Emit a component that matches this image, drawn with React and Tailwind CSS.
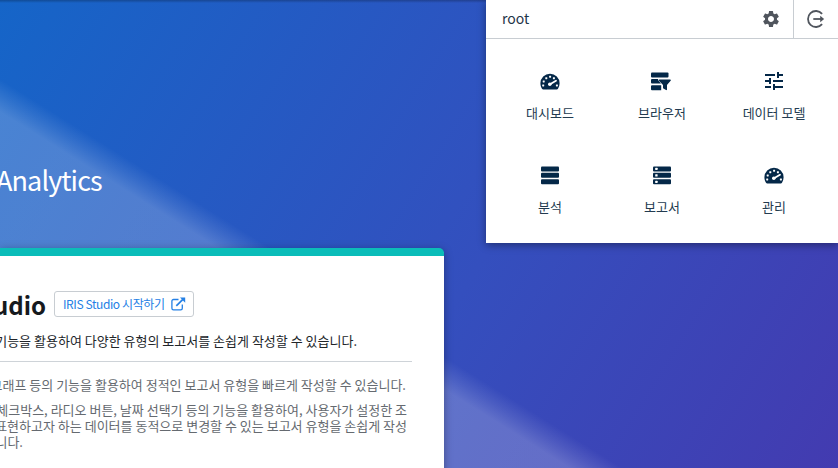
import React from "react";
import { MdSettings, MdTune } from "react-icons/md";

function GaugeIcon() {
  const ticks = [[2.9, 12.4], [3.4, 8.4], [6, 5.2], [9.8, 3.7], [13.6, 5.2], [16.6, 12.4]];
  return (
    <svg width="20" height="17" viewBox="0 0 20 17">
      <path d="M10 .7A9.6 9.6 0 0 0 .4 10.3c0 2 .6 3.9 1.6 5.4.3.5.7.7 1.2.7h13.6c.5 0 .9-.2 1.2-.7a10 10 0 0 0 1.6-5.4A9.6 9.6 0 0 0 10 .7Z" fill="#042848" />
      {ticks.map(([x, y]) => (
        <rect key={x} x={x - 0.7} y={y - 1} width="2" height="2" rx=".4" fill="white" />
      ))}
      <path d="m10 11.2 6-3.5" stroke="white" strokeWidth="1.8" strokeLinecap="round" />
      <circle cx="9.8" cy="11.3" r="1.8" fill="white" />
    </svg>
  );
}

function BrowserIcon() {
  return (
    <svg width="21" height="19" viewBox="0 0 21 19" fill="#042848" className="mr-[3px]">
      <rect x="1" y=".5" width="17.5" height="5" rx="1" />
      <path d="M2 7h6l.4 1.5L11 11.5H2a1 1 0 0 1-1-1V8a1 1 0 0 1 1-1ZM2 13.2h9.2v5.1H2a1 1 0 0 1-1-1v-3.1a1 1 0 0 1 1-1Z" />
      <path d="M9.5 7.5h10.6c.8 0 1 .8.5 1.3L17 13v4.6c0 .7-.5.8-1 .5l-2.6-1.5c-.3-.2-.4-.5-.4-.8V13L9 8.8c-.5-.5-.3-1.3.5-1.3Z" />
    </svg>
  );
}

function StackIcon({ dots }) {
  return (
    <svg width="18" height="19" viewBox="0 0 18 19">
      {[0.4, 6.8, 13.3].map((y) => (
        <g key={y}>
          <rect x="0" y={y} width="18" height="5" rx="1" fill="#042848" />
          {dots && <rect x="2.2" y={y + 1.4} width="2.4" height="2.2" rx=".5" fill="white" />}
        </g>
      ))}
    </svg>
  );
}

function LogoutIcon() {
  return (
    <svg width="20" height="20" viewBox="0 0 20 20" fill="none" stroke="#50555d" strokeWidth="1.8">
      <path d="M16.1 4.8A8 8 0 1 0 16.1 15.2" />
      <path d="M7.3 10h8" />
      <path d="m14.2 6.8 4 3.2-4 3.2Z" fill="#50555d" stroke="none" />
    </svg>
  );
}

function ExternalIcon() {
  return (
    <svg width="15" height="14" viewBox="0 0 15 14" fill="none" stroke="#2480e5" strokeWidth="1.3" className="-mr-px shrink-0">
      <path d="M7.5 2.5h-5A1.6 1.6 0 0 0 .9 4.1v7.1a1.6 1.6 0 0 0 1.6 1.6h7.2a1.6 1.6 0 0 0 1.6-1.6V7.5" />
      <path d="m5.3 8.8 6.6-6.5" strokeWidth="1.7" />
      <path d="M9 .5h5.2v5.2Z" fill="#2480e5" stroke="none" />
    </svg>
  );
}

const items = [
  ["대시보드", <GaugeIcon />],
  ["브라우저", <BrowserIcon />],
  ["데이터 모델", <MdTune size={24} />],
  ["분석", <StackIcon />],
  ["보고서", <StackIcon dots />],
  ["관리", <GaugeIcon />],
];

export default function App() {
  return (
    <div className="relative h-[468px] w-[838px] overflow-hidden bg-[linear-gradient(32deg,rgba(255,255,255,0.21)_0px,rgba(255,255,255,0.21)_302px,rgba(255,255,255,0.1)_316px,rgba(255,255,255,0)_330px),linear-gradient(122deg,#1565c8_0%,#344fbe_57%,#433bb0_100%)] font-['Noto_Sans_CJK_KR',sans-serif] whitespace-nowrap">
      <div className="h-[3px] bg-linear-to-b from-black/25 to-transparent" />
      <main className="w-[444px]">
        <h1 className="mt-[157px] -ml-[4px] h-[88px] text-[27px] leading-[40px] tracking-[-0.9px] text-white">Analytics</h1>
        <section className="h-[240px] rounded-tr-[5px] border-t-8 border-[#0bbdb9] bg-white shadow-[0_2px_8px_rgba(0,0,0,0.35)]">
          <div className="flex h-[61px] items-end">
            <h2 className="flex w-[46px] justify-end text-[24px] leading-[24px] font-bold text-[#16191d]">Studio</h2>
            <button className="ml-2 flex h-[26px] w-[140px] items-center justify-between rounded-[3px] border border-[#c8cdd2] px-2 text-[12px] leading-4 tracking-[-0.4px] text-[#2480e5]">
              <span>IRIS Studio 시작하기</span>
              <ExternalIcon />
            </button>
          </div>
          <p className="mt-[14px] flex w-[357px] justify-end text-[13px] leading-5 text-[#212529]">기능을 활용하여 다양한 유형의 보고서를 손쉽게 작성할 수 있습니다.</p>
          <hr className="mt-[10px] w-[412px] border-[#ced3d8]" />
          <div className="mt-[15px] text-[13px] leading-4 text-[#656a70]">
            <p className="flex w-[406px] justify-end">그래프 등의 기능을 활용하여 정적인 보고서 유형을 빠르게 작성할 수 있습니다.</p>
            <div className="mt-[9px] w-[407px]">
              <p className="flex justify-end">체크박스, 라디오 버튼, 날짜 선택기 등의 기능을 활용하여, 사용자가 설정한 조</p>
              <p className="flex justify-end">표현하고자 하는 데이터를 동적으로 변경할 수 있는 보고서 유형을 손쉽게 작성</p>
              <p className="flex w-[23px] justify-end">니다.</p>
            </div>
          </div>
        </section>
      </main>
      <aside className="absolute top-0 right-0 h-[243px] w-[352px] bg-white shadow-[0_2px_8px_rgba(0,0,0,0.4)]">
        <header className="flex h-[39px] border-b border-[#c8cdd2] text-[14px] text-[#1f3448]">
          <span className="ml-4 flex-1 leading-[36px]">root</span>
          <span className="flex w-[46px] items-center justify-center border-r border-[#c8cdd2] text-[#50555d]">
            <MdSettings size={20} />
          </span>
          <span className="flex w-[44px] items-center justify-center">
            <LogoutIcon />
          </span>
        </header>
        <nav className="mx-2 mt-[22px] grid grid-cols-3 gap-y-[30px]">
          {items.map(([label, icon]) => (
            <a key={label} className="flex h-16 flex-col items-center text-[#042848]">
              <span className="mb-[2px] flex h-10 items-center justify-center">{icon}</span>
              <span className="text-[13px] leading-5 text-[#233b50]">{label}</span>
            </a>
          ))}
        </nav>
      </aside>
    </div>
  );
}
